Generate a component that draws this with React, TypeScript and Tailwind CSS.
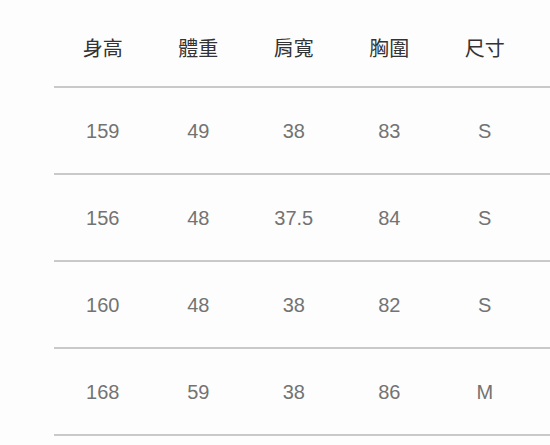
import React from "react";

const headers = ["身高", "體重", "肩寬", "胸圍", "尺寸"];
const rows = [
  ["159", "49", "38", "83", "S"],
  ["156", "48", "37.5", "84", "S"],
  ["160", "48", "38", "82", "S"],
  ["168", "59", "38", "86", "M"],
];

export default function App() {
  return (
    <div className="w-[550px] h-[445px] bg-[#fdfdfd] overflow-hidden">
      <div className="ml-[54px] flex flex-col">
        <div
          className="h-[88px] pt-[10px] border-b-2 border-[#c9c9c9] grid grid-cols-[repeat(5,95.5px)] items-center pl-[1px] text-[20px] text-[#333333]"
          style={{ fontFamily: '"Noto Sans CJK TC", "Noto Sans CJK SC", sans-serif' }}
        >
          {headers.map((h) => (
            <div key={h} className="text-center leading-none">
              {h}
            </div>
          ))}
        </div>
        {rows.map((r, i) => (
          <div
            key={i}
            className="h-[87px] border-b-2 border-[#c9c9c9] grid grid-cols-[repeat(5,95.5px)] items-center pl-[1px] text-[20px] text-[#737373]"
            style={{ fontFamily: '"Liberation Sans", Arial, sans-serif' }}
          >
            {r.map((c, j) => (
              <div key={j} className="text-center leading-none">
                {c}
              </div>
            ))}
          </div>
        ))}
      </div>
    </div>
  );
}
